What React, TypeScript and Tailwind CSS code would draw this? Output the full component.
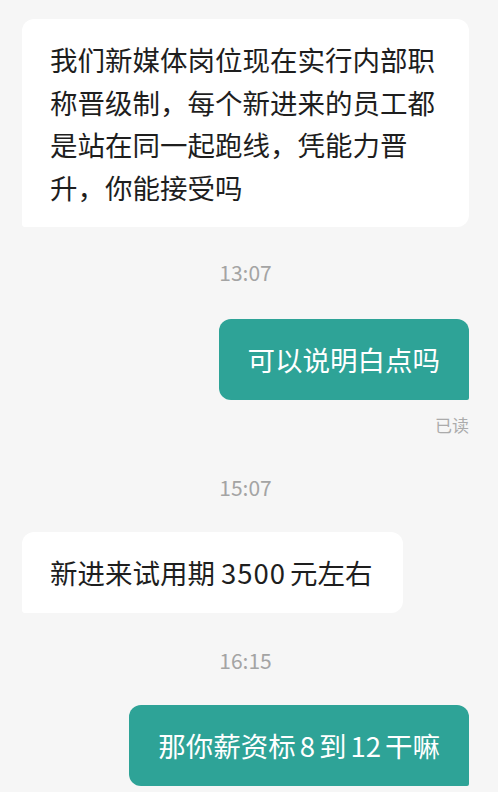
import React from 'react';

type Msg =
    | { kind: 'time'; text: string; mt: string }
    | { kind: 'in'; text: React.ReactNode; mt: string }
    | { kind: 'out'; text: React.ReactNode; mt: string; read?: boolean };

const Num = ({ children }: { children: React.ReactNode }) => <span className="mx-[4px]">{children}</span>;

const MESSAGES: Msg[] = [
    { kind: 'in', text: '我们新媒体岗位现在实行内部职称晋级制，每个新进来的员工都是站在同一起跑线，凭能力晋升，你能接受吗', mt: 'mt-0' },
    { kind: 'time', text: '13:07', mt: 'mt-[33px]' },
    { kind: 'out', text: '可以说明白点吗', mt: 'mt-[35px]', read: true },
    { kind: 'time', text: '15:07', mt: 'mt-[38px]' },
    {
        kind: 'in',
        text: <>新进来试用期<span className="ml-[6px] mr-[4px] tracking-[1px]">3500</span>元左右</>,
        mt: 'mt-[33px]',
    },
    { kind: 'time', text: '16:15', mt: 'mt-[35px]' },
    { kind: 'out', text: <>那你薪资标<Num>8</Num>到<Num>12</Num>干嘛</>, mt: 'mt-[33px]' },
];

export default function App() {
    return (
        <div
            className="w-[498px] h-[792px] overflow-hidden bg-[#f6f6f6] pt-[19px] pl-[22px] pr-[29px]"
            style={{ fontFamily: '"Noto Sans CJK SC", "Noto Sans", sans-serif' }}
        >
            <div className="flex flex-col">
                {MESSAGES.map((m, i) => {
                    if (m.kind === 'time') {
                        return (
                            <div key={i} className={`${m.mt} text-center text-[21px] leading-[24px] text-[#a4a4a4]`}>
                                {m.text}
                            </div>
                        );
                    }
                    if (m.kind === 'in') {
                        return (
                            <div key={i} className={`${m.mt} flex justify-start`}>
                                <div className="max-w-[447px] bg-white rounded-[12px] rounded-bl-[3px] pl-[28px] pr-[30px] py-[19px] text-[27.5px] leading-[42.5px] text-[#1e1e1e]">
                                    {m.text}
                                </div>
                            </div>
                        );
                    }
                    return (
                        <div key={i} className={`${m.mt} flex flex-col items-end`}>
                            <div className="max-w-[447px] bg-[#2ea397] rounded-[12px] rounded-br-[2px] pl-[29px] pr-[29px] py-[19px] text-[27.5px] leading-[43px] text-white">
                                {m.text}
                            </div>
                            {m.read && (
                                <div className="mt-[13px] text-[17px] leading-[24px] text-[#ababab]">已读</div>
                            )}
                        </div>
                    );
                })}
            </div>
        </div>
    );
}
